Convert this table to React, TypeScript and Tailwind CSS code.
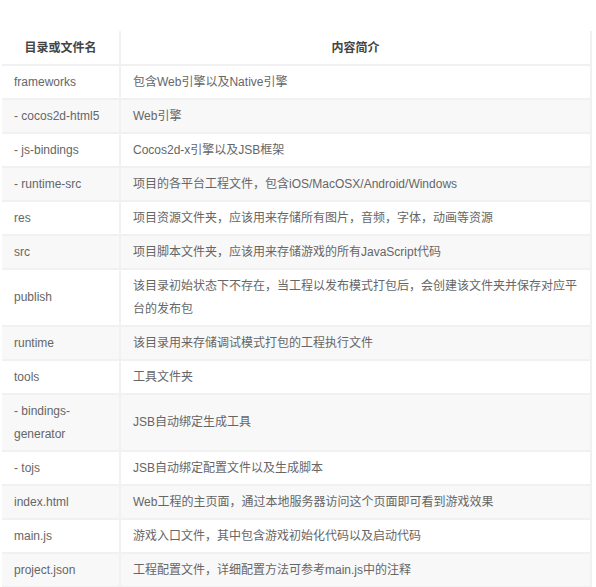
const rows: [string, string][] = [
  ["frameworks", "包含Web引擎以及Native引擎"],
  ["- cocos2d-html5", "Web引擎"],
  ["- js-bindings", "Cocos2d-x引擎以及JSB框架"],
  ["- runtime-src", "项目的各平台工程文件，包含iOS/MacOSX/Android/Windows"],
  ["res", "项目资源文件夹，应该用来存储所有图片，音频，字体，动画等资源"],
  ["src", "项目脚本文件夹，应该用来存储游戏的所有JavaScript代码"],
  ["publish", "该目录初始状态下不存在，当工程以发布模式打包后，会创建该文件夹并保存对应平台的发布包"],
  ["runtime", "该目录用来存储调试模式打包的工程执行文件"],
  ["tools", "工具文件夹"],
  ["- bindings-generator", "JSB自动绑定生成工具"],
  ["- tojs", "JSB自动绑定配置文件以及生成脚本"],
  ["index.html", "Web工程的主页面，通过本地服务器访问这个页面即可看到游戏效果"],
  ["main.js", "游戏入口文件，其中包含游戏初始化代码以及启动代码"],
  ["project.json", "工程配置文件，详细配置方法可参考main.js中的注释"],
];

export default function App() {
  return (
    <div className="w-[596px] h-[587px] bg-white pt-[31px] pl-[2px] font-['Liberation_Sans','Noto_Sans_CJK_SC',sans-serif] text-[12px]">
      <table className="w-[590px] border-collapse table-fixed">
        <colgroup>
          <col className="w-[118px]" />
          <col />
        </colgroup>
        <thead>
          <tr className="bg-white">
            <th className="border-2 border-[#f1f1f1] border-t-0 border-l-0 h-[34px] font-bold text-[#444] text-center">
              目录或文件名
            </th>
            <th className="border-2 border-[#f1f1f1] border-t-0 h-[34px] font-bold text-[#444] text-center">
              内容简介
            </th>
          </tr>
        </thead>
        <tbody>
          {rows.map(([name, desc], i) => (
            <tr key={name} className={i % 2 === 1 ? "bg-[#f8f8f8]" : "bg-white"}>
              <td className="border-2 border-[#f1f1f1] border-l-0 pl-[12px] pr-[8px] py-[4.5px] leading-[23px] text-[#666] align-middle">
                {name}
              </td>
              <td className="border-2 border-[#f1f1f1] px-[12px] py-[4.5px] leading-[23px] text-[#666] align-middle">
                {desc}
              </td>
            </tr>
          ))}
        </tbody>
      </table>
    </div>
  );
}
